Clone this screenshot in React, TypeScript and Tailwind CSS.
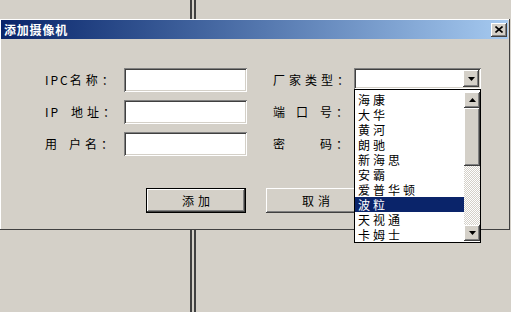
import React from 'react';

const sunken = 'shadow-[inset_1px_1px_0_#808080,inset_-1px_-1px_0_#ffffff,inset_2px_2px_0_#404040,inset_-2px_-2px_0_#d4d0c8]';
const raised = 'shadow-[inset_-1px_-1px_0_#404040,inset_1px_1px_0_#ffffff,inset_-2px_-2px_0_#808080,inset_2px_2px_0_#d4d0c8]';

const vendors = ['海康', '大华', '黄河', '朗驰', '新海思', '安霸', '爱普华顿', '波粒', '天视通', '卡姆士'];

function Arrow({ up }: { up?: boolean }) {
  return (
    <svg width="7" height="4" viewBox="0 0 7 4" className={up ? 'rotate-180' : ''}>
      <path d="M0 0h7L3.5 4z" fill="#000" />
    </svg>
  );
}

function Field({ w = 'w-[123px]' }: { w?: string }) {
  return <div className={`${w} h-[24px] bg-white ${sunken}`} />;
}

function Button({ label, isDefault }: { label: string; isDefault?: boolean }) {
  return (
    <div className={`w-[100px] h-[25px] ${isDefault ? 'border border-black' : ''}`}>
      <div className={`h-full w-full flex items-center justify-center tracking-[4px] pl-[4px] ${raised}`}>{label}</div>
    </div>
  );
}

export default function App() {
  return (
    <div className="relative w-[511px] h-[312px] overflow-hidden bg-[#d4d0c8] font-['Noto_Sans_CJK_SC',sans-serif] text-[12px] text-black">
      {/* desktop behind the dialog */}
      <div className="absolute left-[190px] top-0 h-full w-[6px] border-x-2 border-[#404040]" />

      {/* dialog window */}
      <div className={`absolute left-0 top-[19px] w-[510px] h-[211px] flex flex-col bg-[#d4d0c8] p-[1px] pr-[2px] pb-[2px] shadow-[inset_-1px_-1px_0_#404040,inset_1px_1px_0_#ffffff]`}>
        <div className="h-[19px] flex items-center justify-between pl-[3px] pr-[1px] bg-linear-to-r from-[#0a246a] to-[#a6caf0]">
          <span className="text-white font-bold text-[12px] tracking-[0.8px] leading-none">添加摄像机</span>
          <div className={`w-[16px] h-[14px] flex items-center justify-center bg-[#d4d0c8] ${raised}`}>
            <svg width="8" height="7" viewBox="0 0 8 7">
              <path d="M0.5 0.5l7 6M7.5 0.5l-7 6" stroke="#000" strokeWidth="1.6" />
            </svg>
          </div>
        </div>

        <div className="pt-[29px] pl-[44px]">
          <div className="flex gap-[26px]">
            <div className="flex flex-col gap-[8px]">
              <div className="h-[24px] flex items-center">
                <div className="w-[79px] whitespace-nowrap">
                  <span className="tracking-[2px]">IPC</span>
                  <span className="tracking-[4px]">名称：</span>
                </div>
                <Field />
              </div>
              <div className="h-[24px] flex items-center">
                <div className="w-[79px] whitespace-nowrap">
                  <span className="inline-block w-[26px] tracking-[2px]">IP</span>
                  <span className="tracking-[4px]">地址：</span>
                </div>
                <Field />
              </div>
              <div className="h-[24px] flex items-center">
                <div className="w-[79px] whitespace-nowrap">
                  <span className="inline-block w-[24px]">用</span>
                  <span className="tracking-[4px]">户名：</span>
                </div>
                <Field />
              </div>
            </div>

            <div className="flex flex-col gap-[8px]">
              <div className="h-[24px] flex items-center">
                <div className="w-[81px] whitespace-nowrap">
                  <span className="tracking-[4px]">厂家类型：</span>
                </div>
                <div className={`self-start w-[127px] h-[21px] bg-white flex justify-end p-[2px] ${sunken}`}>
                  <div className={`w-[16px] h-[17px] flex items-center justify-center bg-[#d4d0c8] ${raised}`}>
                    <Arrow />
                  </div>
                </div>
              </div>
              <div className="h-[24px] flex items-center">
                <div className="w-[81px] whitespace-nowrap">
                  <span className="inline-block w-[23px]">端</span>
                  <span className="inline-block w-[24px]">口</span>
                  <span className="tracking-[4px]">号：</span>
                </div>
                <Field w="w-[127px]" />
              </div>
              <div className="h-[24px] flex items-center">
                <div className="w-[81px] whitespace-nowrap">
                  <span className="inline-block w-[47px]">密</span>
                  <span className="tracking-[4px]">码：</span>
                </div>
                <Field w="w-[127px]" />
              </div>
            </div>
          </div>

          <div className="mt-[32px] flex gap-[20px] pl-[101px]">
            <Button label="添加" isDefault />
            <Button label="取消" />
          </div>
        </div>
      </div>

      {/* open combo list */}
      <div className="absolute left-[354px] top-[89px] w-[127px] h-[154px] border border-black bg-white flex">
        <div className="flex-1 pt-[2px]">
          {vendors.map((v) => (
            <div
              key={v}
              className={`h-[15px] leading-[15px] pl-[3px] tracking-[3px] whitespace-nowrap ${v === '波粒' ? 'bg-[#0a246a] text-white' : ''}`}
            >
              {v}
            </div>
          ))}
        </div>
        <div className="w-[16px] flex flex-col pt-[2px] pb-[1px]">
          <div className={`h-[16px] flex items-center justify-center bg-[#d4d0c8] ${raised}`}>
            <Arrow up />
          </div>
          <div className={`h-[58px] bg-[#d4d0c8] ${raised}`} />
          <div className="flex-1 bg-[repeating-conic-gradient(#d4d0c8_0_25%,#ffffff_0_50%)] bg-size-[2px_2px]" />
          <div className={`h-[16px] flex items-center justify-center bg-[#d4d0c8] ${raised}`}>
            <Arrow />
          </div>
        </div>
      </div>
    </div>
  );
}
